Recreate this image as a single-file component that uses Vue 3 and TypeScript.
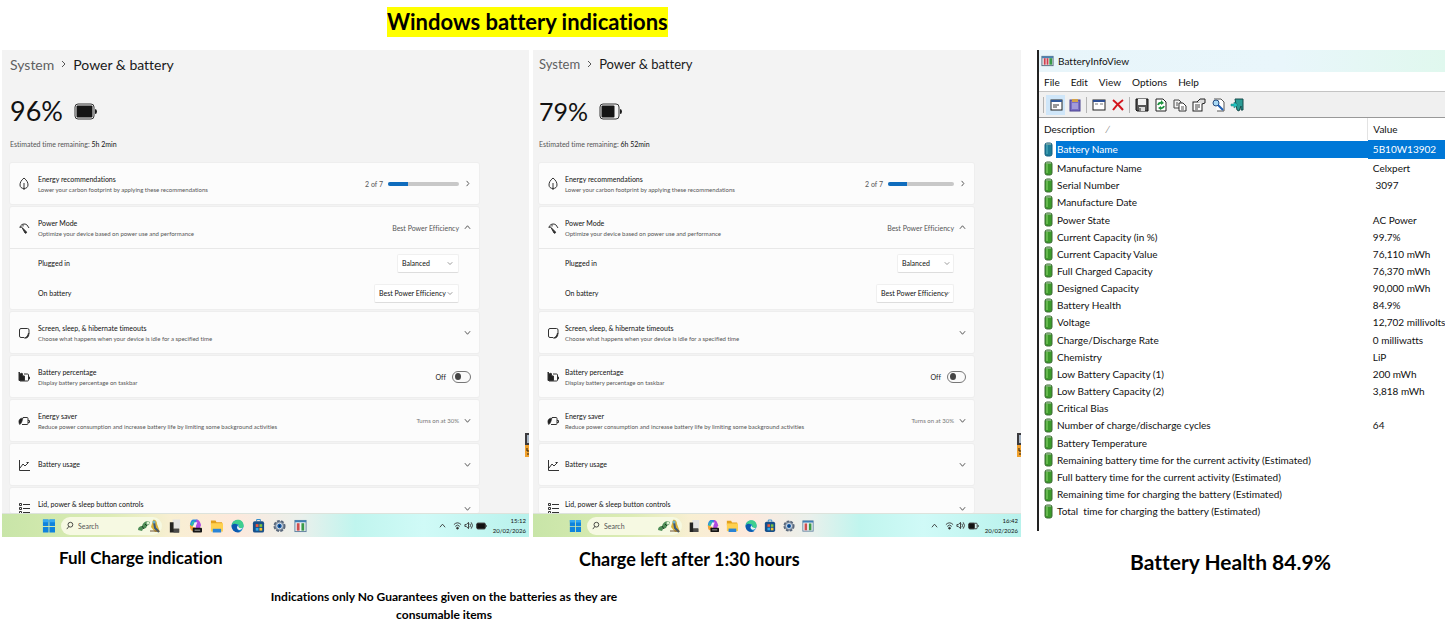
<script setup lang="ts">
import { ref } from 'vue'

interface Laptop {
  id: string
  size: 'wide' | 'slim'
  percent: number
  remaining: string
  time: string
  caption: string
}

interface InfoRow {
  name: string
  value: string
}

const laptops: Laptop[] = [
  { id: 'full', size: 'wide', percent: 96, remaining: '5h 2min', time: '15:12', caption: 'Full Charge indication' },
  { id: 'after', size: 'slim', percent: 79, remaining: '6h 52min', time: '16:42', caption: 'Charge left after 1:30 hours' },
]

const menus: string[] = ['File', 'Edit', 'View', 'Options', 'Help']

const rows: InfoRow[] = [
  { name: 'Battery Name', value: '5B10W13902' },
  { name: 'Manufacture Name', value: 'Celxpert' },
  { name: 'Serial Number', value: '\u00a03097' },
  { name: 'Manufacture Date', value: '' },
  { name: 'Power State', value: 'AC Power' },
  { name: 'Current Capacity (in %)', value: '99.7%' },
  { name: 'Current Capacity Value', value: '76,110 mWh' },
  { name: 'Full Charged Capacity', value: '76,370 mWh' },
  { name: 'Designed Capacity', value: '90,000 mWh' },
  { name: 'Battery Health', value: '84.9%' },
  { name: 'Voltage', value: '12,702 millivolts' },
  { name: 'Charge/Discharge Rate', value: '0 milliwatts' },
  { name: 'Chemistry', value: 'LiP' },
  { name: 'Low Battery Capacity (1)', value: '200 mWh' },
  { name: 'Low Battery Capacity (2)', value: '3,818 mWh' },
  { name: 'Critical Bias', value: '' },
  { name: 'Number of charge/discharge cycles', value: '64' },
  { name: 'Battery Temperature', value: '' },
  { name: 'Remaining battery time for the current activity (Estimated)', value: '' },
  { name: 'Full battery time for the current activity (Estimated)', value: '' },
  { name: 'Remaining time for charging the battery (Estimated)', value: '' },
  { name: 'Total \u00a0time for charging the battery (Estimated)', value: '' },
]

const selected = ref(0)
</script>

<template>
  <main class="page">
    <h1 class="headline"><mark>Windows battery indications</mark></h1>

    <div class="shots">
      <figure v-for="l in laptops" :key="l.id" class="shot" :class="l.size">
        <section class="screen">
          <div class="settings">
            <nav class="crumbs">
              <a href="#system">System</a>
              <svg class="crumb-sep" viewBox="0 0 5 8"><path d="M1 1l3 3-3 3" /></svg>
              <h2>Power &amp; battery</h2>
            </nav>

            <div class="level">
              <span>{{ l.percent }}%</span>
              <svg class="level-icon" viewBox="0 0 23 17">
                <rect x="1" y="1" width="19" height="15" rx="3" fill="#f3f3f3" stroke="#333" stroke-width="1" />
                <path d="M21 6q2 0 2 2.500t-2 2.500z" fill="#1b1b1b" />
                <rect x="2.500" y="2.500" :width="l.percent > 90 ? 16 : 13" height="12" rx="1" fill="#151515" />
              </svg>
            </div>
            <p class="remaining">Estimated time remaining: <b>{{ l.remaining }}</b></p>

            <div class="cards">
              <div class="card">
                <div class="line">
                  <svg class="ico" viewBox="0 0 12 14"><path d="M6 1C3 3.500 2 5.500 2 8c0 2 1.500 3.500 4 3.500S10 10 10 8c0-2.500-1-4.500-4-7zM6 6v7" /></svg>
                  <div class="texts"><strong>Energy recommendations</strong><small>Lower your carbon footprint by applying these recommendations</small></div>
                  <label class="note" :for="l.id + '-bar'">2 of 7</label>
                  <progress :id="l.id + '-bar'" class="bar" value="2" max="7"></progress>
                  <svg class="chev" viewBox="0 0 8 8"><path d="M3 1l2.500 3L3 7" /></svg>
                </div>
              </div>

              <div class="card">
                <div class="line">
                  <svg class="ico" viewBox="0 0 12 14"><path d="M2 7C2 3 7 2 9 4M9 4l2 3M5 3.500v2M2 6h2" /><path d="M4 6.500l4.500 4.500c.3 1-.8 1.600-1.500 1z" fill="#222" /></svg>
                  <div class="texts"><strong>Power Mode</strong><small>Optimize your device based on power use and performance</small></div>
                  <span class="note">Best Power Efficiency</span>
                  <svg class="chev" viewBox="0 0 8 8"><path d="M1 5.500L4 2l3 3.500" /></svg>
                </div>
                <div class="sub">
                  <div class="choice">
                    <label :for="l.id + '-plugged'">Plugged in</label>
                    <span class="pick short">
                      <select :id="l.id + '-plugged'"><option>Balanced</option><option>Best Performance</option></select>
                      <svg viewBox="0 0 8 8"><path d="M1 3l3 3 3-3" /></svg>
                    </span>
                  </div>
                  <div class="choice">
                    <label :for="l.id + '-onbattery'">On battery</label>
                    <span class="pick long">
                      <select :id="l.id + '-onbattery'"><option>Best Power Efficiency</option><option>Balanced</option></select>
                      <svg viewBox="0 0 8 8"><path d="M1 3l3 3 3-3" /></svg>
                    </span>
                  </div>
                </div>
              </div>

              <div class="card">
                <div class="line">
                  <svg class="ico" viewBox="0 0 12 14"><path d="M6 11.500H3A1.500 1.500 0 0 1 1.500 10V4A1.500 1.500 0 0 1 3 2.500h6.500A1.500 1.500 0 0 1 11 4v4" /><path d="M10.500 7c1 3-1 5.500-4 5 2-.5 3.500-2 4-5z" fill="#111" /></svg>
                  <div class="texts"><strong>Screen, sleep, &amp; hibernate timeouts</strong><small>Choose what happens when your device is idle for a specified time</small></div>
                  <svg class="chev" viewBox="0 0 8 8"><path d="M1 2.500L4 6l3-3.500" /></svg>
                </div>
              </div>

              <div class="card">
                <div class="line">
                  <svg class="ico" viewBox="0 0 12 14"><path d="M6 4h3.500q1 0 1 1v5q0 1-1 1H2M10.500 7h1v2h-1" /><path d="M1 2l1.500 2L4 3l1 3h1.500v4.500H1z" fill="#222" /></svg>
                  <div class="texts"><strong>Battery percentage</strong><small>Display battery percentage on taskbar</small></div>
                  <label class="toggle">Off<input type="checkbox" role="switch" aria-label="Battery percentage" /></label>
                </div>
              </div>

              <div class="card">
                <div class="line">
                  <svg class="ico" viewBox="0 0 12 14"><path d="M5 3.500h4q1 0 1 1v5q0 1-1 1H4M10 6.500h1.500v2H10" /><path d="M5 4C1 4 0 7 1.500 10.500 3 10.500 4 8 5 4z" fill="#222" stroke-width="0.500" /></svg>
                  <div class="texts"><strong>Energy saver</strong><small>Reduce power consumption and increase battery life by limiting some background activities</small></div>
                  <span class="note dim">Turns on at 30%</span>
                  <svg class="chev" viewBox="0 0 8 8"><path d="M1 2.500L4 6l3-3.500" /></svg>
                </div>
              </div>

              <div class="card">
                <div class="line">
                  <svg class="ico" viewBox="0 0 12 14"><path d="M1.500 2v10.500H12M2 10l3-4 2 2 3.500-3.500M8.500 4.500h2" /></svg>
                  <div class="texts"><strong>Battery usage</strong></div>
                  <svg class="chev" viewBox="0 0 8 8"><path d="M1 2.500L4 6l3-3.500" /></svg>
                </div>
              </div>

              <div class="card cut">
                <div class="line">
                  <svg class="ico" viewBox="0 0 12 14"><path d="M5 2.500h7M5 6.500h7M5 10.500h7M1.500 1.500h2v2h-2zM1.500 5.500h2v2h-2zM1.500 9.500h2v2h-2z" /></svg>
                  <div class="texts"><strong>Lid, power &amp; sleep button controls</strong><small>Choose what happens when you interact with your device's physical controls</small></div>
                  <svg class="chev" viewBox="0 0 8 8"><path d="M1 2.500L4 6l3-3.500" /></svg>
                </div>
              </div>
            </div>

            <svg class="edge" viewBox="0 0 4 24">
              <rect width="4" height="12" fill="#3b3a3d" /><rect x="2" y="2" width="2" height="8" fill="#a9b6c4" />
              <rect y="12" width="4" height="12" fill="#f0a02c" /><path d="M2 15v3h2M2 21h2" stroke="#2a2010" fill="none" />
            </svg>
          </div>

          <footer class="taskbar">
            <button type="button" class="app" aria-label="Start">
              <svg viewBox="0 0 14 16"><path d="M1 1h6v7H1zM8 1h6v7H8zM1 9h6v6H1zM8 9h6v6H8z" fill="#0f83dd" /><path d="M1 1h6v3H1zM8 1h6v3H8z" fill="#36a8f0" /></svg>
            </button>
            <label class="search">
              <svg class="lens" viewBox="0 0 10 10"><circle cx="5.500" cy="4" r="3" /><path d="M3.500 6.300L1 9.500" /></svg>
              <input type="text" placeholder="Search" aria-label="Search" />
              <svg class="critters" viewBox="0 0 24 14">
                <path d="M1 11c0-3 2-4 4-4 1-4 5-6 8-4l-1 3c-2 0-2 1-3 3l-3 1-1 2z" fill="#4d8d56" /><path d="M5 7l2 3M8 5l2 2" stroke="#1f3d26" /><circle cx="11" cy="4" r="1.500" fill="#dff0d2" />
                <path d="M16 1c2-1 4 1 4 4l3 8h-5l-4-5z" fill="#d9b23a" /><path d="M17 3l1 6 4 4" stroke="#39597c" stroke-width="2" fill="none" /><path d="M13 12h9" stroke="#6d533a" stroke-width="1" /><circle cx="17" cy="3" r="1.500" fill="#6bb0c9" />
              </svg>
            </label>
            <div class="apps">
              <button type="button" class="app" aria-label="Task view">
                <svg viewBox="0 0 14 16"><rect x="5" y="1" width="8" height="10" fill="#e3e3e3" /><path d="M2 4h4v7h6v4H2z" fill="#222" /><rect x="6" y="11" width="6" height="4" fill="#4a4a4a" /></svg>
              </button>
              <button type="button" class="app" aria-label="Copilot">
                <svg viewBox="0 0 14 16"><path d="M4 1h5l2 4-3 3H1C1 5 2 2 4 1z" fill="#2a8be0" /><path d="M8 1c3 0 4 3 5 6l-2 5H7z" fill="#b04be0" /><path d="M1 7h6l-2 6H3C1 12 1 9 1 7z" fill="#f3a33a" /><path d="M3 4l3-2-2 6H2z" fill="#33c3a0" /><path d="M6 4h3l-2 5H4z" fill="#f7f2f5" /><rect x="4" y="10" width="10" height="5" rx="1" fill="#151515" /><path d="M6 12.500h6" stroke="#aaa" stroke-width="1" /></svg>
              </button>
              <button type="button" class="app" aria-label="File Explorer">
                <svg viewBox="0 0 14 16"><path d="M1 2h5l1 2h6v3H1z" fill="#e3a01b" /><path d="M1 5h13v9H1z" fill="#ffd04f" /><path d="M3 11h9v4H3z" fill="#2a84d6" /></svg>
              </button>
              <button type="button" class="app" aria-label="Edge">
                <svg viewBox="0 0 14 16"><circle cx="7" cy="8" r="6.500" fill="#1383d0" /><path d="M1 8c0-9 13-9 12.500 0 0 3-4 3-5 1 1-3-3-5-7-1z" fill="#3fcf8e" /><path d="M1 7c3-3 6-1 6 1-2 2 0 6 4 6-6 3-11-2-10-7z" fill="#0d58ae" /><path d="M8 7q-3 3 0 5 3 1 5-2-3 1-5-1z" fill="#f3f4ee" /></svg>
              </button>
              <button type="button" class="app" aria-label="Microsoft Store">
                <svg viewBox="0 0 14 16"><path d="M5 3V1h4v2" fill="none" stroke="#2887c9" /><rect x="1" y="3" width="12" height="12" rx="2" fill="#174f8a" /><path d="M4 6h3v3H4z" fill="#f05a3a" /><path d="M8 6h3v3H8z" fill="#7cc242" /><path d="M4 10h3v3H4z" fill="#2fa9ea" /><path d="M8 10h3v3H8z" fill="#fbc12d" /></svg>
              </button>
              <button type="button" class="app" aria-label="Settings">
                <svg viewBox="0 0 14 16"><circle cx="7" cy="8" r="5.500" fill="#8a97a6" stroke="#59677a" stroke-width="2" stroke-dasharray="3 1.500" /><circle cx="7" cy="8" r="3" fill="#1b5fa8" stroke="#e5ebf2" /><circle cx="7" cy="8" r="1" fill="#0e2d55" /></svg>
              </button>
              <button type="button" class="app" aria-label="BatteryInfoView">
                <svg viewBox="0 0 14 16"><rect x="1" y="2" width="12" height="12" fill="#f1f3f5" stroke="#5c7f9d" /><path d="M1 2h12v2H1z" fill="#3f7fb5" /><rect x="3" y="5" width="3" height="8" fill="#cf4d4d" /><rect x="8" y="5" width="3" height="8" fill="#3a9a49" /></svg>
              </button>
            </div>
            <div class="tray">
              <svg class="t-up" viewBox="0 0 8 8"><path d="M1 6l3-3.500L7 6" /></svg>
              <svg class="t-wifi" viewBox="0 0 10 10"><path d="M1 4q4-4 8 0M2.500 6q2.500-3 5 0" /><circle cx="5" cy="8" r="1" fill="#333" /></svg>
              <svg class="t-vol" viewBox="0 0 10 10"><path d="M1 4h1.500L5 1.500v7L2.500 6H1zM6.500 3q1.500 2 0 4M8 1.500q3 3.500 0 7" /></svg>
              <svg class="t-bat" viewBox="0 0 12 8"><rect x="1" y="1" width="9" height="6" rx="1" fill="#d9f6f2" /><rect x="1" y="1" :width="l.percent > 90 ? 9 : 6" height="6" rx="1" fill="#111" /><path d="M11.200 3v2" /></svg>
              <div class="clock"><time>{{ l.time }}</time><span>20/02/2026</span></div>
            </div>
          </footer>
        </section>
        <figcaption>{{ l.caption }}</figcaption>
      </figure>

      <figure class="shot info">
        <section class="viewer">
          <header class="titlebar">
            <svg viewBox="0 0 14 12"><rect x="1" y="1" width="12" height="10" fill="#eef2f5" stroke="#53697c" /><path d="M1 1h12v2H1z" fill="#4a82b3" /><rect x="3" y="3" width="2" height="7" fill="#cf3d4d" /><rect x="6" y="3" width="2" height="7" fill="#cf3d4d" /><rect x="9" y="3" width="3" height="7" fill="#3a9a49" /></svg>
            BatteryInfoView
          </header>
          <nav class="menubar"><button v-for="m in menus" :key="m" type="button">{{ m }}</button></nav>
          <div class="toolbar">
            <i class="split"></i>
            <button type="button" class="tool on" aria-label="Show all batteries"><svg viewBox="0 0 14 14"><rect x="2" y="2" width="11" height="10" fill="#fff" stroke="#222" /><path d="M2 3h11" stroke="#335b9a" stroke-width="2" /><path d="M4 7h6M4 9h4" stroke="#333" /></svg></button>
            <button type="button" class="tool" aria-label="Battery log"><svg viewBox="0 0 14 14"><rect x="2" y="2" width="10" height="11" fill="#7b6fc4" stroke="#4a4390" /><rect x="4" y="1" width="6" height="3" fill="#d3a34b" /><path d="M4 6h6M4 8h6M4 10h6" stroke="#c9c5f0" /></svg></button>
            <i class="split"></i>
            <button type="button" class="tool" aria-label="Options window"><svg viewBox="0 0 14 14"><rect x="1" y="2" width="12" height="10" fill="#fff" stroke="#222" /><path d="M1 3h12" stroke="#2e4f94" stroke-width="2" /><path d="M3 6h3M8 6h3" stroke="#777" /></svg></button>
            <button type="button" class="tool" aria-label="Delete"><svg viewBox="0 0 14 14"><path d="M2 2q5 4 10 10M12 2Q6 6 2 12" stroke="#d3141c" stroke-width="2" fill="none" /></svg></button>
            <i class="split"></i>
            <button type="button" class="tool" aria-label="Save"><svg viewBox="0 0 14 14"><path d="M1 1h12v12H2l-1-1z" fill="#555" stroke="#111" /><rect x="3" y="1" width="8" height="6" fill="#f2f2f2" /><rect x="4" y="9" width="6" height="4" fill="#ddd" /><path d="M5 10v3" stroke="#222" /></svg></button>
            <button type="button" class="tool" aria-label="Refresh"><svg viewBox="0 0 14 14"><path d="M2 1h7l3 3v9H2z" fill="#fff" stroke="#222" /><path d="M4 7q1-3 4-2M10 8q-1 3-4 2" stroke="#1f9440" stroke-width="2" fill="none" /><path d="M7 2l3 3-3 2zM7 8v4l-3-2z" fill="#1f9440" /></svg></button>
            <button type="button" class="tool" aria-label="Copy"><svg viewBox="0 0 14 14"><path d="M1 2h5l2 2v6H1z" fill="#f3f3f3" stroke="#444" /><path d="M6 5h4l3 3v5H6z" fill="#fff" stroke="#333" /><path d="M3 5h2M3 7h2M8 9h3M8 11h3" stroke="#555" /></svg></button>
            <button type="button" class="tool" aria-label="Properties"><svg viewBox="0 0 14 14"><rect x="1" y="4" width="9" height="9" fill="#fff" stroke="#222" /><path d="M3 7h5M3 9h5M3 11h3" stroke="#444" /><path d="M5 4l3-3h5v4l-3 1" fill="#ddd" stroke="#222" /></svg></button>
            <button type="button" class="tool" aria-label="Find"><svg viewBox="0 0 14 14"><path d="M3 1h7l3 3v9H6" fill="#fff" stroke="#555" /><circle cx="5" cy="5" r="3" fill="#a9d9f5" stroke="#274c80" /><path d="M7 7l5 5" stroke="#1f5fb4" stroke-width="2" /></svg></button>
            <button type="button" class="tool" aria-label="Exit"><svg viewBox="0 0 14 14"><path d="M5 1h8v11h-2V8l-2 5-2-1z" fill="#2b9c95" stroke="#174b4b" /><path d="M1 6h3V4l4 3-4 3V8H1z" fill="#1fc4c0" stroke="#15706f" stroke-width="0.500" /></svg></button>
          </div>
          <table>
            <thead><tr><th scope="col">Description <span class="sort">&#x2215;</span></th><th scope="col">Value</th></tr></thead>
            <tbody>
              <tr v-for="(r, i) in rows" :key="r.name" :class="{ sel: i === selected }" @click="selected = i">
                <td>
                  <div class="name">
                    <svg viewBox="0 0 9 15">
                      <rect x="1" y="1" width="7" height="13" rx="2" :fill="i === selected ? '#1d7d97' : '#3c9a2b'" :stroke="i === selected ? '#155f80' : '#3d6b35'" />
                      <path d="M3 3v9" :stroke="i === selected ? '#5ab6c4' : '#8fd873'" /><path d="M2 2h5" stroke="#b9c4b4" />
                    </svg>
                    <span>{{ r.name }}</span>
                  </div>
                </td>
                <td>{{ r.value }}</td>
              </tr>
            </tbody>
          </table>
        </section>
        <figcaption>Battery Health 84.9%</figcaption>
      </figure>
    </div>

    <p class="disclaimer">Indications only No Guarantees given on the batteries as they are consumable items</p>
  </main>
</template>

<style>
body { margin: 0; background: #fff; }
</style>

<style scoped>
.page { color: #000; font-family: Lato, "Open Sans", sans-serif; font-variant-ligatures: none; }
.page * { box-sizing: border-box; }
svg { display: block; flex: none; }
button { border: 0; padding: 0; background: none; font: inherit; color: inherit; }
.headline { margin: 0; padding: 7px 0 13px 387px; font-size: 22px; line-height: 30px; }
.headline mark { display: inline-block; background: #ff0; color: #000; }
.shots { display: grid; grid-template-columns: 527fr 488fr 420fr; padding-left: 2px; column-gap: 4px; align-items: start; }
.shot { margin: 0; min-width: 0; }
figcaption { font-weight: bold; font-size: 18px; line-height: 24px; white-space: nowrap; }

.wide { --padl: 8px; --padr: 50px; --gap: 8px; --indent: 28px; --short: 62px; --long: 85px; --bar: 71px; --start: 40px; --pill: 101px; --app: 13px; --appgap: 8px; --big: 27px; --head: 14px; --body: 7px; --fine: 6px; }
.slim { --padl: 6px; --padr: 47px; --gap: 6px; --indent: 26px; --short: 57px; --long: 78px; --bar: 66px; --start: 36px; --pill: 95px; --app: 12px; --appgap: 7px; --big: 25px; --head: 13px; --body: 7px; --fine: 6px; }
.wide figcaption { padding: 9px 0 0 57px; font-size: 17px; }
.slim figcaption { padding: 10px 0 0 46px; }

.screen { background: #f3f3f3; font-size: var(--body); }
.settings { position: relative; padding: 0 var(--padr) 0 var(--padl); }
.crumbs { display: flex; align-items: center; gap: 7px; height: 28px; font-size: var(--head); color: #5f5f5f; }
.crumbs a { color: inherit; text-decoration: none; }
.crumbs h2 { margin: 0; font-size: inherit; font-weight: normal; color: #1a1a1a; }
.crumb-sep { width: 5px; height: 8px; fill: none; stroke: #555; }
.level { display: flex; align-items: center; gap: 11px; margin-top: 13px; font-size: var(--big); line-height: 40px; color: #111; }
.level-icon { width: 23px; height: 17px; }
.remaining { margin: 7px 0 13px; line-height: 12px; color: #555; }
.remaining b { font-weight: normal; color: #111; }

.cards { display: grid; gap: 3px; }
.card { background: #fcfcfc; border-radius: 2px; box-shadow: 0 0 0 1px #eee; }
.card.cut { height: 25px; overflow: hidden; }
.line { display: flex; align-items: center; height: 41px; padding: 0 8px; }
.ico { width: 12px; height: 14px; margin-right: var(--gap); fill: none; stroke: #333; }
.texts { flex: 1; display: grid; white-space: nowrap; }
.texts strong { font-weight: normal; line-height: 11px; color: #111; }
.texts small { font-size: var(--fine); line-height: 9px; color: #555; }
.note { color: #555; white-space: nowrap; }
.note.dim { color: #777; font-size: var(--fine); }
.chev { width: 7px; height: 7px; margin-left: 5px; fill: none; stroke: #444; }
.bar { appearance: none; width: var(--bar); height: 4px; margin-left: 5px; border: 0; border-radius: 2px; overflow: hidden; background: #c8c8c8; }
.bar::-webkit-progress-bar { background: #c8c8c8; }
.bar::-webkit-progress-value { background: #0f6cbd; }
.sub { padding-bottom: 1px; box-shadow: inset 0 1px #e8e8e8; }
.choice { display: flex; align-items: center; justify-content: space-between; height: 30px; padding: 0 20px 0 var(--indent); color: #111; }
.pick { position: relative; }
.pick.short { width: var(--short); }
.pick.long { width: var(--long); }
.pick select { appearance: none; display: block; width: 100%; height: 19px; padding: 0 4px; border: 1px solid #f0f0f0; border-bottom-color: #ddd; border-radius: 2px; background: #fff; font: inherit; color: #111; }
.pick svg { position: absolute; right: 6px; top: 6px; width: 6px; height: 6px; fill: none; stroke: #777; pointer-events: none; }
.slim .pick svg { right: 4px; }
.toggle { display: flex; align-items: center; gap: 6px; color: #222; }
.toggle input { appearance: none; display: flex; align-items: center; width: 19px; height: 12px; margin: 0; padding-left: 2px; border: 1px solid #777; border-radius: 6px; background: #fafafa; }
.toggle input::before { content: ""; width: 6px; height: 7px; border-radius: 50%; background: #444; }
.toggle input:checked { background: #0f6cbd; justify-content: flex-end; }
.edge { position: absolute; right: 0; top: 383px; width: 4px; height: 24px; }

.taskbar { position: relative; display: flex; align-items: center; height: 24px; padding-left: var(--start); border-top: 1px solid #dde3dc; background: linear-gradient(90deg, #c8e5a8 0%, #dcecb4 20%, #f8efd2 32%, #fde9dc 44%, #e9f0ec 57%, #c0f5ee 67%, #d0faf7 80%, #b8f2ec 100%); }
.app { width: var(--app); height: 16px; }
.app svg { width: 100%; height: 16px; }
.search { display: flex; align-items: center; width: var(--pill); height: 18px; margin: 0 6px; padding: 0 1px 0 5px; border-radius: 9px; background: #f6f9e2; }
.search input { flex: 1; min-width: 0; padding: 0 0 0 4px; border: 0; background: none; font: inherit; }
.search input::placeholder { color: #555; opacity: 1; }
.lens { width: 8px; height: 9px; fill: none; stroke: #222; }
.critters { width: 24px; height: 14px; }
.apps { display: flex; gap: var(--appgap); }
.tray { display: flex; align-items: center; margin-left: auto; padding-right: 3px; }
.tray svg { fill: none; stroke: #333; }
.t-up { width: 7px; height: 7px; margin-right: 7px; }
.t-wifi { width: 9px; height: 9px; margin-right: 2px; }
.t-vol { width: 9px; height: 9px; margin-right: 3px; }
.t-bat { width: 11px; height: 8px; margin-right: 6px; }
.clock { display: grid; font-size: var(--fine); line-height: 10px; text-align: right; color: #111; }

.info { padding-left: 12px; }
.info figcaption { padding: 19px 0 0 93px; font-size: 21px; }
.viewer { padding-bottom: 11px; border-left: 2px solid #222; background: #fff; font-size: 10px; color: #111; overflow: hidden; }
.titlebar { display: flex; align-items: center; gap: 4px; height: 22px; padding-left: 2px; background: linear-gradient(90deg, #e8f5fa 0%, #e9f6fb 60%, #e0f8ee 100%); }
.titlebar svg { width: 13px; height: 12px; }
.menubar { display: flex; align-items: center; gap: 11px; height: 19px; padding-left: 5px; }
.toolbar { display: flex; align-items: center; height: 27px; padding-left: 2px; border-top: 1px solid #c4c4c4; border-bottom: 1px solid #999; background: #f0f0f0; }
.tool { display: grid; place-items: center; width: 19px; height: 20px; }
.tool svg { width: 14px; height: 14px; fill: none; }
.tool.on { background: #cfe6f9; }
.split { width: 1px; height: 16px; margin: 0 2px; background: #b5b5b5; }
table { width: 100%; height: 402px; border-collapse: collapse; table-layout: fixed; line-height: 14px; }
th, td { padding: 0; font-weight: normal; text-align: left; white-space: nowrap; }
thead tr { height: 22px; }
th:first-child { width: 81%; padding-left: 5px; border-right: 1px solid #e3e3e3; }
th:last-child, td:last-child { padding-left: 5px; }
.sort { margin-left: 8px; color: #888; }
.name { display: flex; align-items: center; height: 100%; padding-left: 5px; gap: 3px; }
.name svg { width: 9px; height: 15px; }
.name span { flex: 1; padding-left: 1px; }
.sel { color: #fff; }
.sel .name span, .sel td:last-child { background: #0078d7; line-height: 17px; }

.disclaimer { width: 380px; margin: 14px 0 0 254px; font-weight: bold; font-size: 12px; line-height: 18px; text-align: center; }
</style>
